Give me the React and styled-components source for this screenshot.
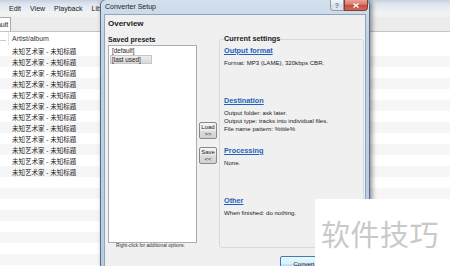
import React from 'react';
import styled, { createGlobalStyle } from 'styled-components';

const Global = createGlobalStyle`
    html, body {
        margin: 0;
        padding: 0;
        background: #fff;
    }
    body {
        font-family: "Liberation Sans", "Noto Sans CJK SC", Arial, sans-serif;
        color: #1a1a1a;
    }
`;

const Desktop = styled.div`
    position: relative;
    width: 450px;
    height: 266px;
    overflow: hidden;
    background: #fff;
`;

/* ---- main player window (background) ---- */

const MainWindow = styled.div`
    display: flex;
    flex-direction: column;
    height: 100%;
    overflow: hidden;
`;

const MenuBar = styled.div`
    height: 17px;
    flex-shrink: 0;
    display: flex;
    align-items: center;
    gap: 9px;
    padding-left: 9px;
    font-size: 7px;
    background: linear-gradient(#c6d2e0 0, #dde5ee 4px, #eef1f5 11px, #f1f2f4 12px, #f0f0f0 17px);
`;

const MenuItem = styled.span`
    line-height: 10px;
`;

const TabStrip = styled.div`
    height: 14px;
    flex-shrink: 0;
    display: flex;
    align-items: flex-end;
    background: #ececec;
    border-bottom: 1px solid #c4c4c4;
`;

const Tab = styled.div`
    height: 13px;
    margin-left: -19px;
    padding: 0 2px 0 4px;
    display: flex;
    align-items: center;
    font-size: 7px;
    background: #fff;
    border: 1px solid #a8a8a8;
    border-bottom: none;
`;

const ListHeader = styled.div`
    height: 13px;
    flex-shrink: 0;
    display: flex;
    align-items: center;
    font-size: 7px;
    color: #333;
    background: #fff;
`;

const HeaderCell = styled.div`
    width: ${(p) => p.$w}px;
    height: 100%;
    display: flex;
    align-items: center;
    padding-left: ${(p) => p.$pad || 0}px;
    border-right: ${(p) => (p.$divider ? '1px solid #e3e3e3' : 'none')};
    overflow: hidden;
    white-space: nowrap;
    box-sizing: border-box;
`;

const TrackRow = styled.div`
    height: 11px;
    flex-shrink: 0;
    display: flex;
    align-items: center;
    padding-left: 12px;
    font-size: 6.5px;
    color: #222;
    background: ${(p) => (p.$odd ? '#f6f6f6' : '#fff')};
`;

/* ---- converter dialog ---- */

const Dialog = styled.div`
    position: absolute;
    left: 100px;
    top: -1px;
    width: 270px;
    height: 290px;
    box-sizing: border-box;
    display: flex;
    flex-direction: column;
    padding: 0 3px;
    border: 1px solid #566a82;
    border-radius: 6px 6px 0 0;
    background: linear-gradient(#d3dfec, #bfd1e6 40px, #b7cbe3);
    box-shadow: 2px 0 5px rgba(0, 0, 0, 0.45);
`;

const TitleBar = styled.div`
    height: 14px;
    flex-shrink: 0;
    margin: 0 -2px 0 -3px;
    padding-left: 4px;
    display: flex;
    align-items: flex-start;
`;

const Title = styled.div`
    flex: 1;
    line-height: 14px;
    font-size: 7px;
    color: #1c1c1c;
`;

const CaptionButton = styled.div`
    width: ${(p) => p.$w}px;
    height: 11px;
    box-sizing: border-box;
    display: flex;
    align-items: center;
    justify-content: center;
    font-size: 7px;
    font-weight: bold;
    color: ${(p) => (p.$close ? '#fff' : '#6a7a8c')};
    border: 1px solid ${(p) => (p.$close ? '#8a3a2e' : '#8d9db0')};
    border-top: none;
    border-radius: ${(p) => (p.$close ? '0 0 4px 0' : '0 0 0 4px')};
    background: ${(p) =>
        p.$close
            ? 'linear-gradient(#e8a596, #d5786a 45%, #c4493a 50%, #d26b5a)'
            : 'linear-gradient(#f3f6fa, #e0e7ef 45%, #d2dce7 50%, #e2e9f1)'};
`;

const Client = styled.div`
    flex: 1;
    display: flex;
    flex-direction: column;
    padding: 0 1px 0 3px;
    background: #f0f0f0;
    border: 1px solid #8ea4bf;
`;

const Heading = styled.div`
    margin-top: 4px;
    line-height: 10px;
    font-size: 8px;
    font-weight: bold;
    color: #1a1a1a;
`;

const Body = styled.div`
    margin-top: 6px;
    display: grid;
    grid-template-columns: 89px 18px 1fr;
    column-gap: 2px;
`;

const PresetColumn = styled.div`
    display: flex;
    flex-direction: column;
`;

const Caption = styled.div`
    line-height: 10px;
    font-size: 7px;
    font-weight: bold;
    color: #1a1a1a;
    white-space: nowrap;
`;

const PresetList = styled.div`
    height: 198px;
    box-sizing: border-box;
    display: flex;
    flex-direction: column;
    align-items: flex-start;
    padding: 0 1px;
    background: #fff;
    border: 1px solid #a9aeb6;
`;

const PresetItem = styled.div`
    min-width: ${(p) => (p.$selected ? 42 : 0)}px;
    box-sizing: border-box;
    padding: 0 1px;
    line-height: 7px;
    font-size: 6.3px;
    color: #222;
    background: ${(p) => (p.$selected ? 'linear-gradient(#ececec, #d9d9d9)' : 'transparent')};
    border: 1px solid ${(p) => (p.$selected ? '#c6c6c6' : 'transparent')};
`;

const Hint = styled.div`
    padding-left: 8px;
    line-height: 5px;
    font-size: 4.8px;
    color: #333;
    white-space: nowrap;
`;

const ButtonColumn = styled.div`
    display: flex;
    flex-direction: column;
    gap: 8px;
    padding-top: 87px;
`;

const SmallButton = styled.div`
    height: 17px;
    box-sizing: border-box;
    display: flex;
    flex-direction: column;
    align-items: center;
    justify-content: center;
    font-size: 6px;
    line-height: 6.5px;
    color: #222;
    border: 1px solid #8a8a8a;
    border-radius: 2px;
    background: linear-gradient(#f4f4f4, #ebebeb 50%, #dedede 50%, #d2d2d2);
`;

const SettingsBox = styled.fieldset`
    margin: 0;
    min-width: 0;
    padding: 3px 4px 1px;
    border: 1px solid #d3dbe2;
    border-radius: 3px;
    display: flex;
    flex-direction: column;
`;

const Legend = styled.legend`
    padding: 0;
    line-height: 8px;
    font-size: 7.3px;
    font-weight: bold;
    color: #1a1a1a;
`;

const Section = styled.div`
    height: 50px;
    display: flex;
    flex-direction: column;
`;

const SectionLink = styled.div`
    line-height: 10px;
    font-size: 7.3px;
    font-weight: bold;
    color: #1e62b8;
    text-decoration: underline;
`;

const SectionLines = styled.div`
    margin-top: 3px;
    line-height: 8px;
    font-size: 6.1px;
    color: #222;
    white-space: nowrap;
`;

const Footer = styled.div`
    margin-top: 8px;
    display: flex;
    justify-content: flex-end;
    gap: 4px;
`;

const PushButton = styled.div`
    width: ${(p) => p.$w}px;
    height: 15px;
    box-sizing: border-box;
    display: flex;
    align-items: center;
    justify-content: center;
    font-size: 6px;
    color: #222;
    border: 1px solid ${(p) => (p.$default ? '#3c7fb1' : '#8a8a8a')};
    border-radius: 2px;
    background: ${(p) =>
        p.$default
            ? 'linear-gradient(#eaf6fd, #d9f0fc 50%, #bee6fd 50%, #a9dbf6)'
            : 'linear-gradient(#f4f4f4, #ebebeb 50%, #dedede 50%, #d2d2d2)'};
`;

/* ---- watermark overlay ---- */

const Watermark = styled.div`
    position: absolute;
    left: 315px;
    top: 199px;
    right: 0;
    bottom: 0;
    display: flex;
    align-items: center;
    padding-left: 6px;
    background: #fff;
    font-family: "Noto Sans CJK SC", sans-serif;
    font-size: 29px;
    letter-spacing: 0.5px;
    color: #c9c9c9;
    white-space: nowrap;
`;

const settings = [
    { title: 'Output format', lines: ['Format: MP3 (LAME), 320kbps CBR.'] },
    {
        title: 'Destination',
        lines: [
            'Output folder: ask later.',
            'Output type: tracks into individual files.',
            'File name pattern: %title%',
        ],
    },
    { title: 'Processing', lines: ['None.'] },
    { title: 'Other', lines: ['When finished: do nothing.'] },
];

const tracks = Array.from({ length: 20 }, (_, i) => i);

const App = () => {
    return (
        <Desktop>
            <Global />
            <MainWindow>
                <MenuBar>
                    <MenuItem>Edit</MenuItem>
                    <MenuItem>View</MenuItem>
                    <MenuItem>Playback</MenuItem>
                    <MenuItem>Library</MenuItem>
                </MenuBar>
                <TabStrip>
                    <Tab>Default</Tab>
                </TabStrip>
                <ListHeader>
                    <HeaderCell $w={9} $divider>...</HeaderCell>
                    <HeaderCell $w={200} $pad={3}>Artist/album</HeaderCell>
                </ListHeader>
                {tracks.map((i) => (
                    <TrackRow key={i} $odd={i % 2 === 1}>
                        {i < 12 ? '未知艺术家 - 未知标题' : ''}
                    </TrackRow>
                ))}
            </MainWindow>

            <Dialog>
                <TitleBar>
                    <Title>Converter Setup</Title>
                    <CaptionButton $w={14}>?</CaptionButton>
                    <CaptionButton $w={24} $close>
                        <svg width="6" height="5" viewBox="0 0 6 5">
                            <path d="M0.5 0.5 L5.5 4.5 M5.5 0.5 L0.5 4.5" stroke="#fff" strokeWidth="1.4" />
                        </svg>
                    </CaptionButton>
                </TitleBar>
                <Client>
                    <Heading>Overview</Heading>
                    <Body>
                        <PresetColumn>
                            <Caption>Saved presets</Caption>
                            <PresetList>
                                <PresetItem>[default]</PresetItem>
                                <PresetItem $selected>[last used]</PresetItem>
                            </PresetList>
                            <Hint>Right-click for additional options.</Hint>
                        </PresetColumn>
                        <ButtonColumn>
                            <SmallButton>
                                <span>Load</span>
                                <span>&gt;&gt;</span>
                            </SmallButton>
                            <SmallButton>
                                <span>Save</span>
                                <span>&lt;&lt;</span>
                            </SmallButton>
                        </ButtonColumn>
                        <SettingsBox>
                            <Legend>Current settings</Legend>
                            {settings.map((s) => (
                                <Section key={s.title}>
                                    <SectionLink>{s.title}</SectionLink>
                                    <SectionLines>
                                        {s.lines.map((l) => (
                                            <div key={l}>{l}</div>
                                        ))}
                                    </SectionLines>
                                </Section>
                            ))}
                        </SettingsBox>
                    </Body>
                    <Footer>
                        <PushButton $w={48} $default>Convert</PushButton>
                        <PushButton $w={32}>Close</PushButton>
                    </Footer>
                </Client>
            </Dialog>

            <Watermark>软件技巧</Watermark>
        </Desktop>
    );
};

export default App;
